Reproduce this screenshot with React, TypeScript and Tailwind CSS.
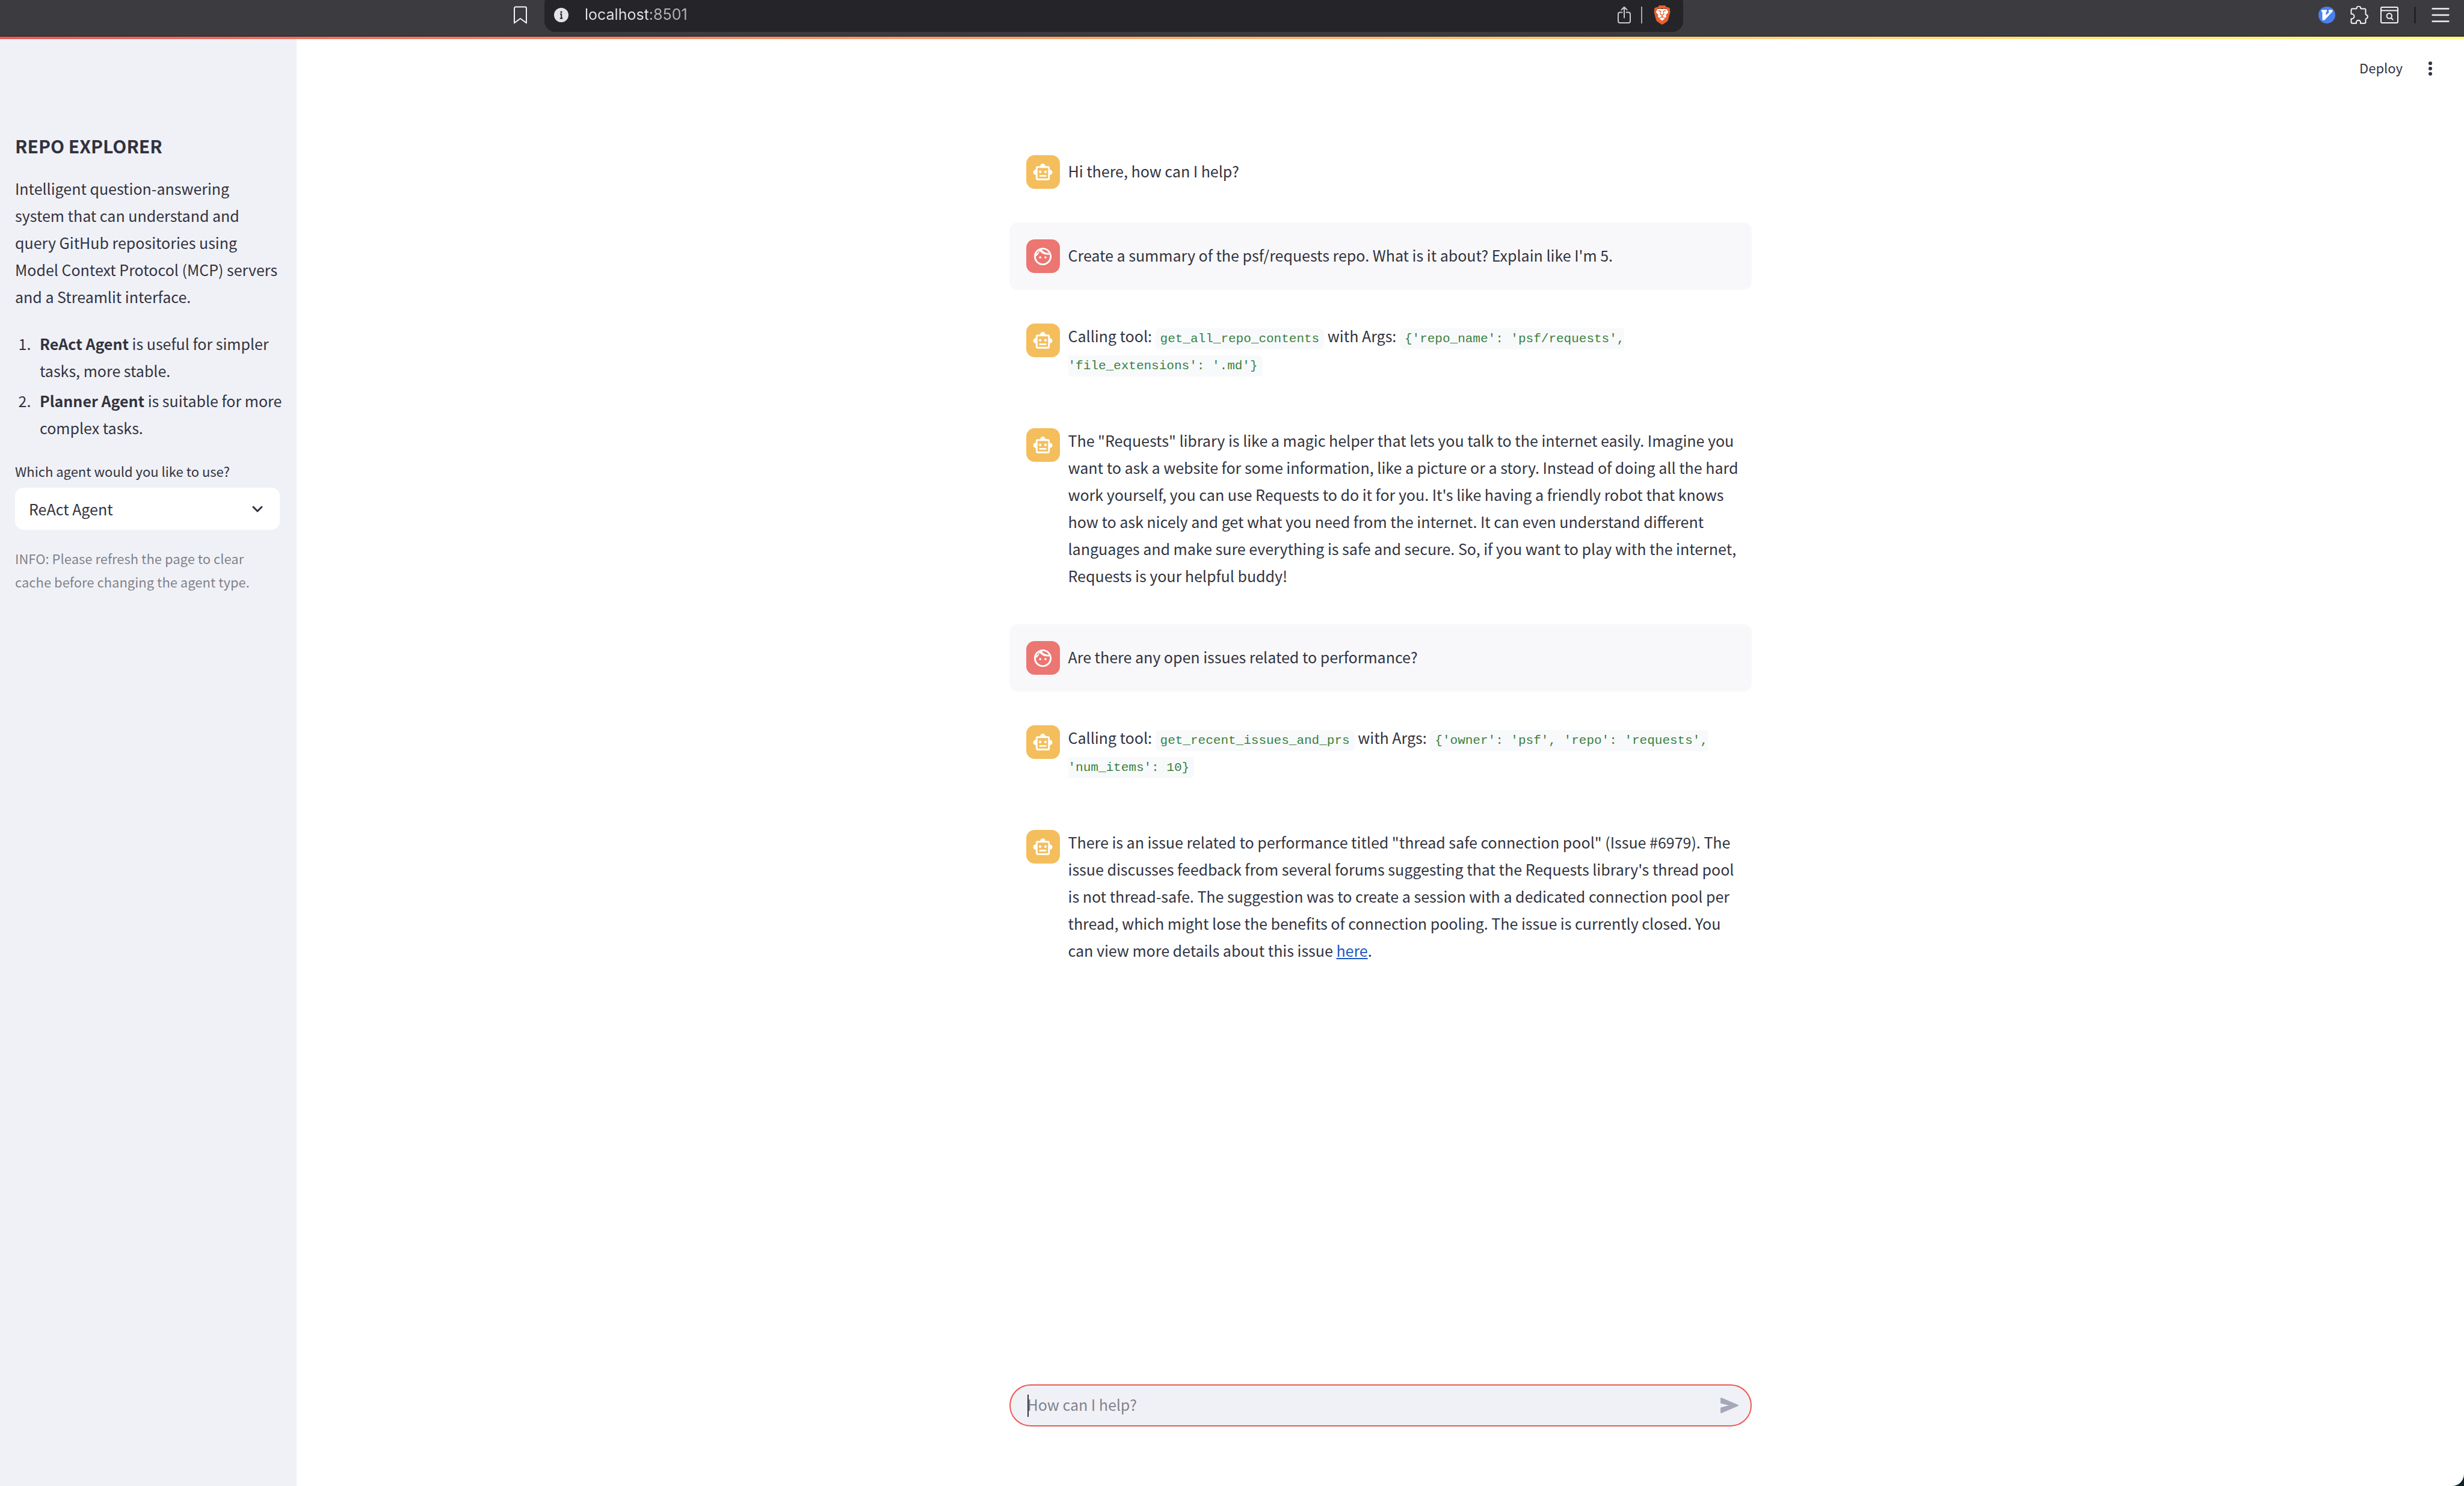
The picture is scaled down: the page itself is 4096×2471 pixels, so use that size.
import { type ReactNode } from "react";
import { SiBrave } from "react-icons/si";

const sans = "font-['Noto_Sans_CJK_SC','Noto_Sans',sans-serif]";

function BotIcon() {
  return (
    <svg viewBox="0 0 24 24" className="size-[35px]" fill="currentColor" aria-hidden="true">
      <path d="M20 9V7c0-1.100-.9-2-2-2h-3c0-1.660-1.340-3-3-3S9 3.340 9 5H6c-1.100 0-2 .9-2 2v2c-1.660 0-3 1.340-3 3s1.340 3 3 3v4c0 1.100.9 2 2 2h12c1.100 0 2-.9 2-2v-4c1.660 0 3-1.340 3-3s-1.340-3-3-3zm-2 10H6V7h12v12zm-9-6c-.83 0-1.500-.67-1.500-1.500S8.170 10 9 10s1.500.67 1.500 1.500S9.830 13 9 13zm7.500-1.500c0 .83-.67 1.500-1.500 1.500s-1.500-.67-1.500-1.500.67-1.500 1.500-1.500 1.500.67 1.500 1.500zM8 15h8v2H8v-2z" />
    </svg>
  );
}

function FaceIcon() {
  return (
    <svg viewBox="0 0 24 24" className="size-[35px]" fill="currentColor" aria-hidden="true">
      <path d="M10.250 13a1.250 1.250 0 1 1-2.500 0 1.250 1.250 0 0 1 2.500 0zM15 11.750a1.250 1.250 0 1 0 0 2.500 1.250 1.250 0 0 0 0-2.500zM22 12c0 5.520-4.480 10-10 10S2 17.520 2 12 6.480 2 12 2s10 4.480 10 10zM10.660 4.120A10.020 10.020 0 0 0 17.500 8c.46 0 .91-.05 1.340-.12A8 8 0 0 0 12 4c-.46 0-.91.05-1.340.12zM4.420 9.470a8.050 8.050 0 0 0 3.660-4.440 8.050 8.050 0 0 0-3.660 4.440zM20 12c0-.78-.12-1.530-.33-2.240-.7.15-1.420.24-2.170.24a11.950 11.950 0 0 1-9.140-4.240A10.020 10.020 0 0 1 4 11.860V12c0 4.410 3.590 8 8 8s8-3.590 8-8z" />
    </svg>
  );
}

function Message({ from, children }: { from: "bot" | "user"; children: ReactNode }) {
  const user = from === "user";
  return (
    <article
      className={
        user ? "flex gap-3.5 rounded-[14px] bg-[#f8f8fa] py-7 pr-3.5 pl-7" : "flex gap-3.5 py-7 pr-3.5 pl-7"
      }
    >
      <div
        className={
          user
            ? "flex size-14 shrink-0 items-center justify-center rounded-[14px] bg-[#ec7671] text-white"
            : "flex size-14 shrink-0 items-center justify-center rounded-[14px] bg-[#f4be5d] text-white"
        }
      >
        {user ? <FaceIcon /> : <BotIcon />}
      </div>
      <p className="-mt-0.5 min-w-0 flex-1 content-center pb-0.5">{children}</p>
    </article>
  );
}

function Code({ children }: { children: ReactNode }) {
  return (
    <code className="rounded-[7px] bg-[#f8f9fb] px-2 py-1.5 font-['Liberation_Mono',monospace] text-[21px] leading-none text-[#3a8140]">
      {children}
    </code>
  );
}

function BrowserBar() {
  return (
    <header className="flex h-[61px] shrink-0 items-start overflow-hidden border-b-2 border-[#313035] bg-[#3c3b3f] pr-6 text-[#f4f4f6]">
      <div className="flex h-[49px] w-[905px] shrink-0 items-center justify-end pr-7">
        <button aria-label="Bookmark this page">
          <svg viewBox="0 0 24 30" className="h-[30px] w-6" fill="none" stroke="currentColor" strokeWidth="2" strokeLinejoin="round" aria-hidden="true">
            <path d="M2 3.500A2 2 0 0 1 4 1.500h16a2 2 0 0 1 2 2V28.300L12 20.800 2 28.300z" />
          </svg>
        </button>
      </div>
      <div className="-mt-3 flex h-[65px] w-[1893px] items-center rounded-[18px] bg-[#252429] pt-2 pr-[19px] pl-4">
        <button aria-label="Site information">
          <svg viewBox="0 0 24 24" className="size-6" aria-hidden="true">
            <circle cx="12" cy="12" r="12" fill="#e4e3e8" />
            <circle cx="12" cy="7" r="1.600" fill="#252429" />
            <path d="M10 10.500h2.200v7M9.800 17.500h4.600" fill="none" stroke="#252429" strokeWidth="2" />
          </svg>
        </button>
        <input
          type="text"
          aria-label="Address"
          defaultValue="localhost:8501"
          className="ml-[27px] min-w-0 flex-1 bg-[linear-gradient(90deg,#e4e3e8_105px,#b4b3b8_105px)] bg-clip-text font-['Inter',sans-serif] text-[25px] text-transparent outline-none"
        />
        <button aria-label="Share">
          <svg viewBox="0 0 24 30" className="h-[30px] w-6" fill="none" stroke="#c9c8cd" strokeWidth="2" strokeLinecap="round" strokeLinejoin="round" aria-hidden="true">
            <path d="M8.500 10.500H5a3 3 0 0 0-3 3V25a3 3 0 0 0 3 3h14a3 3 0 0 0 3-3V13.500a3 3 0 0 0-3-3h-3.500M12 19.500V2M7.500 6.200 12 1.800l4.500 4.400" />
          </svg>
        </button>
        <span className="mr-[17px] ml-4 h-7 w-0.5 bg-[#a9a8ad]" />
        <button aria-label="Brave Shields">
          <svg viewBox="0 0 32 32" className="size-8 text-[#e95f2b]" aria-hidden="true">
            <path d="M8 6h16l3 6-5 11-6 5-6-5-5-11z" fill="#fff" />
            <SiBrave size={32} />
          </svg>
        </button>
      </div>
      <div className="ml-auto flex h-[49px] items-center">
        <button aria-label="Vimium" className="mr-[25px]">
          <svg viewBox="0 0 28 28" className="size-7" aria-hidden="true">
            <circle cx="14" cy="14" r="14" fill="#4a80ea" />
            <path d="M5 5.500h9v3h-1.500v6L18.500 8.500H17v-3h6.500v2.800L10 22.500H6.500v-14H5z" fill="#fff" />
          </svg>
        </button>
        <button aria-label="Extensions" className="mr-5">
          <svg viewBox="0 0 30 30" className="size-[30px]" fill="none" stroke="currentColor" strokeWidth="2" strokeLinejoin="round" aria-hidden="true">
            <path d="M3 4.500h6.800c.6 0 .9-.4.9-1a3.200 3.200 0 0 1 6.400 0c0 .6.3 1 .9 1h5.500a2 2 0 0 1 2 2v7c0 .7.3 1 1 1.200a3.200 3.200 0 0 1 0 6.200c-.7.2-1 .6-1 1.200v4.600a2 2 0 0 1-2 2h-6.500v-1.500a3.500 3.500 0 0 0-7 0v1.500H3.500a2 2 0 0 1-2-2v-5.500h1a4 4 0 0 0 0-8h-1V6.500a2 2 0 0 1 1.500-2z" />
          </svg>
        </button>
        <button aria-label="Search tabs" className="mr-[26px]">
          <svg viewBox="0 0 30 28" className="h-7 w-[30px]" fill="none" stroke="currentColor" strokeWidth="2" strokeLinecap="round" aria-hidden="true">
            <rect x="1" y="1" width="28" height="26" rx="2" />
            <path d="M1 6.500h28M18 19l2.500 2.500" />
            <circle cx="14.800" cy="15.500" r="4.200" />
          </svg>
        </button>
        <span className="mr-[26px] h-7 w-[3px] rounded-full bg-[#232227]" />
        <button aria-label="Menu">
          <svg viewBox="0 0 30 24" className="h-6 w-[30px]" stroke="currentColor" strokeWidth="2.300" strokeLinecap="round" aria-hidden="true">
            <path d="M1.500 1.500h27M1.500 12h27M1.500 22.500h27" />
          </svg>
        </button>
      </div>
    </header>
  );
}

function Sidebar() {
  return (
    <aside className="w-[493px] shrink-0 bg-[#f0f1f6] pt-[156px] pr-7 pl-[25px]">
      <h2 className="text-[30px] leading-[42px] font-semibold">REPO EXPLORER</h2>
      <p className="mt-7">
        Intelligent question-answering system that can understand and query GitHub repositories using Model Context
        Protocol (MCP) servers and a Streamlit interface.
      </p>
      <ol className="mt-[33px] -mr-3 list-decimal space-y-[5px] pl-8">
        <li className="pl-[9px]">
          <strong className="font-semibold">ReAct Agent</strong> is useful for simpler tasks, more stable.
        </li>
        <li className="pl-[9px]">
          <strong className="font-semibold">Planner Agent</strong> is suitable for more complex tasks.
        </li>
      </ol>
      <label htmlFor="agent" className="mt-[30px] block text-[22px] leading-[39px]">
        Which agent would you like to use?
      </label>
      <div className="relative mt-2">
        <select id="agent" className="h-[70px] w-full appearance-none rounded-[14px] bg-white px-[23px]">
          <option>ReAct Agent</option>
          <option>Planner Agent</option>
        </select>
        <svg viewBox="0 0 18 11" className="pointer-events-none absolute top-[30px] right-7 h-[11px] w-[18px]" fill="none" stroke="currentColor" strokeWidth="3" strokeLinecap="round" strokeLinejoin="round" aria-hidden="true">
          <path d="M2 2l7 7 7-7" />
        </svg>
      </div>
      <p className="mt-7 text-[22px] leading-[39px] text-[#31333f]/60">
        INFO: Please refresh the page to clear cache before changing the agent type.
      </p>
    </aside>
  );
}

function Main() {
  return (
    <main className="flex flex-1 flex-col rounded-br-[20px] bg-white">
      <div className="flex h-[98px] items-center justify-end gap-[43px] pr-[53px]">
        <button className="pb-1 text-[22px]">Deploy</button>
        <button aria-label="Main menu">
          <svg viewBox="0 0 6 24" className="h-6 w-1.5" fill="currentColor" aria-hidden="true">
            <circle cx="3" cy="3.300" r="3" />
            <circle cx="3" cy="12" r="3" />
            <circle cx="3" cy="20.700" r="3" />
          </svg>
        </button>
      </div>
      <section className="mx-auto mt-[67px] flex w-full max-w-[1234px] flex-1 flex-col gap-7" aria-label="Conversation">
        <Message from="bot">Hi there, how can I help?</Message>
        <Message from="user">Create a summary of the psf/requests repo. What is it about? Explain like I'm 5.</Message>
        <Message from="bot">
          Calling tool: <Code>get_all_repo_contents</Code> with Args:{" "}
          <Code>{"{'repo_name': 'psf/requests', 'file_extensions': '.md'}"}</Code>
        </Message>
        <Message from="bot">
          The "Requests" library is like a magic helper that lets you talk to the internet easily. Imagine you want to
          ask a website for some information, like a picture or a story. Instead of doing all the hard work yourself,
          you can use Requests to do it for you. It's like having a friendly robot that knows how to ask nicely and get
          what you need from the internet. It can even understand different languages and make sure everything is safe
          and secure. So, if you want to play with the internet, Requests is your helpful buddy!
        </Message>
        <Message from="user">Are there any open issues related to performance?</Message>
        <Message from="bot">
          Calling tool: <Code>get_recent_issues_and_prs</Code> with Args:{" "}
          <Code>{"{'owner': 'psf', 'repo': 'requests', 'num_items': 10}"}</Code>
        </Message>
        <Message from="bot">
          There is an issue related to performance titled "thread safe connection pool" (Issue #6979). The issue
          discusses feedback from several forums suggesting that the Requests library's thread pool is not thread-safe.
          The suggestion was to create a session with a dedicated connection pool per thread, which might lose the
          benefits of connection pooling. The issue is currently closed. You can view more details about this issue{" "}
          <a href="#issue-6979" className="text-[#1c56c4] underline">
            here
          </a>
          .
        </Message>
      </section>
      <form className="mx-auto mb-[99px] flex h-[70px] w-full max-w-[1234px] items-center rounded-full border-2 border-[#ec5953] bg-[#f0f1f6] pr-5 pl-7">
        <span className="-mr-0.5 h-[37px] w-0.5 bg-[#31333f]" />
        <input
          type="text"
          aria-label="How can I help?"
          placeholder="How can I help?"
          className="min-w-0 flex-1 bg-transparent pb-1 outline-none placeholder:text-[#31333f]/60"
        />
        <button type="submit" aria-label="Send message" className="text-[#a5a8b8]">
          <svg viewBox="0 0 30 26" className="h-[26px] w-[30px]" fill="currentColor" aria-hidden="true">
            <path d="M0 1.500C0 .4 1 -.3 2 .2L29.200 12c1 .5 1 1.600 0 2L2 25.800c-1 .5-2-.2-2-1.300V17.600c0-.7.4-1.200 1.100-1.400L14 13 1.100 9.800C.4 9.600 0 9.100 0 8.400z" />
          </svg>
        </button>
      </form>
    </main>
  );
}

export default function App() {
  return (
    <div className={`${sans} flex min-h-screen flex-col bg-[#0f2026] text-[25px] leading-[45px] text-[#31333f]`}>
      <BrowserBar />
      <div className="h-1 shrink-0 bg-linear-to-r from-[#eb5757] to-[#fffd80]" />
      <div className="flex flex-1">
        <Sidebar />
        <Main />
      </div>
    </div>
  );
}
